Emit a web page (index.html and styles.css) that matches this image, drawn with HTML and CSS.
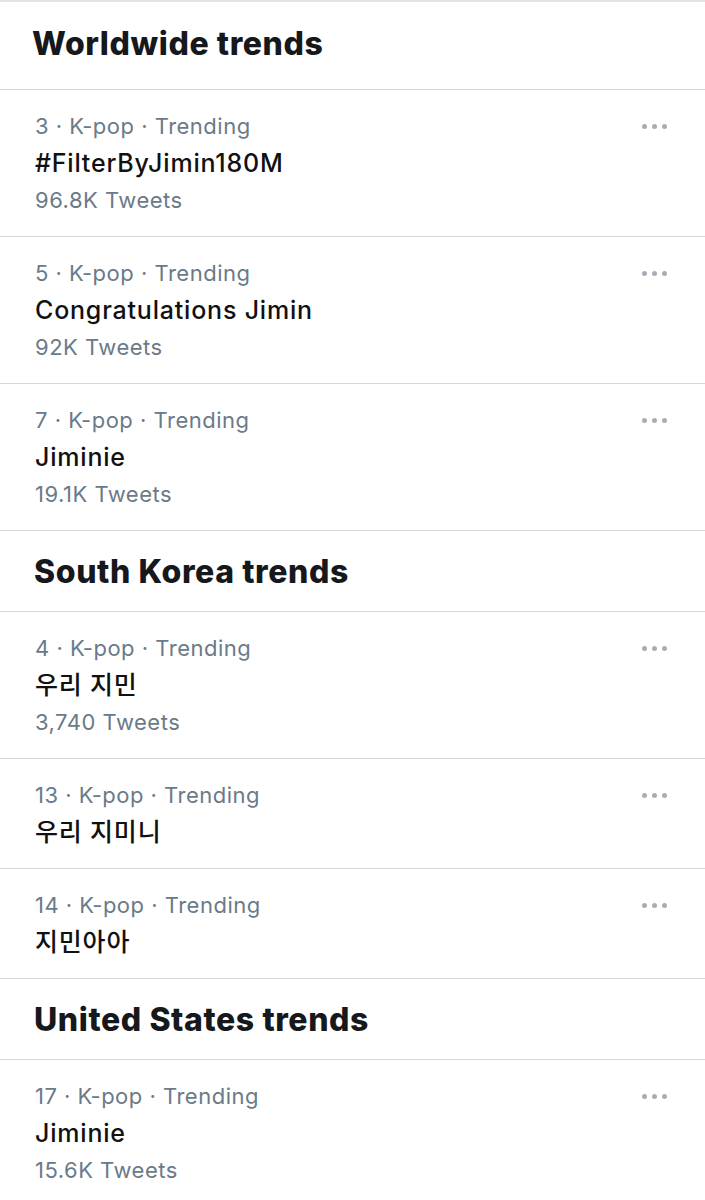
FILE: index.html
```html
<!DOCTYPE html>
<html lang="en">
<head>
    <meta charset="UTF-8">
    <meta name="viewport" content="width=device-width, initial-scale=1.0">
    <title>Trends</title>
    <link rel="stylesheet" href="styles.css">
</head>
<body>

    <div class="trends">
        <!-- Worldwide -->
        <div class="section-head first">Worldwide trends</div>

        <div class="trend">
            <div class="trend-text">
                <div class="meta">3 · K-pop · Trending</div>
                <div class="title">#FilterByJimin180M</div>
                <div class="count">96.8K Tweets</div>
            </div>
            <div class="more"><span></span><span></span><span></span></div>
        </div>

        <div class="trend">
            <div class="trend-text">
                <div class="meta">5 · K-pop · Trending</div>
                <div class="title">Congratulations Jimin</div>
                <div class="count">92K Tweets</div>
            </div>
            <div class="more"><span></span><span></span><span></span></div>
        </div>

        <div class="trend">
            <div class="trend-text">
                <div class="meta">7 · K-pop · Trending</div>
                <div class="title">Jiminie</div>
                <div class="count">19.1K Tweets</div>
            </div>
            <div class="more"><span></span><span></span><span></span></div>
        </div>

        <!-- South Korea -->
        <div class="section-head">South Korea trends</div>

        <div class="trend">
            <div class="trend-text">
                <div class="meta">4 · K-pop · Trending</div>
                <div class="title">우리 지민</div>
                <div class="count">3,740 Tweets</div>
            </div>
            <div class="more"><span></span><span></span><span></span></div>
        </div>

        <div class="trend">
            <div class="trend-text">
                <div class="meta">13 · K-pop · Trending</div>
                <div class="title">우리 지미니</div>
            </div>
            <div class="more"><span></span><span></span><span></span></div>
        </div>

        <div class="trend">
            <div class="trend-text">
                <div class="meta">14 · K-pop · Trending</div>
                <div class="title">지민아아</div>
            </div>
            <div class="more"><span></span><span></span><span></span></div>
        </div>

        <!-- United States -->
        <div class="section-head">United States trends</div>

        <div class="trend">
            <div class="trend-text">
                <div class="meta">17 · K-pop · Trending</div>
                <div class="title">Jiminie</div>
                <div class="count">15.6K Tweets</div>
            </div>
            <div class="more"><span></span><span></span><span></span></div>
        </div>
    </div>

</body>
</html>
```

FILE: styles.css
```css
body {
    margin: 0;
    background-color: #ffffff;
    font-family: Inter, "Noto Sans CJK KR", sans-serif;
    color: #14171a;
}
.trends {
    border-top: 2px solid #e3e3e5;
}
.section-head {
    height: 80px;
    display: flex;
    align-items: center;
    padding-left: 34px;
    font-size: 32px;
    font-weight: 800;
    letter-spacing: 0.6px;
    color: #16181b;
    border-bottom: 1px solid #d8d8da;
}
.section-head.first {
    height: 88px;
    padding-bottom: 4px;
    padding-left: 32px;
    box-sizing: border-box;
}
.trend {
    display: flex;
    justify-content: space-between;
    padding: 18px 0 17px 35px;
    border-bottom: 1px solid #d6d6d9;
}
.trend-text {
    line-height: 37px;
}
.meta {
    font-size: 22px;
    letter-spacing: 0.5px;
    color: #6b7a88;
}
.title {
    font-size: 25px;
    font-weight: 500;
    letter-spacing: 0.8px;
    color: #111;
}
.count {
    font-size: 22px;
    letter-spacing: 0.5px;
    color: #6b7a88;
}
.more {
    display: flex;
    gap: 5px;
    padding: 16px 38px 0 0;
    height: 5px;
}
.more span {
    width: 5px;
    height: 5px;
    border-radius: 50%;
    background: #a9adb3;
}
```
